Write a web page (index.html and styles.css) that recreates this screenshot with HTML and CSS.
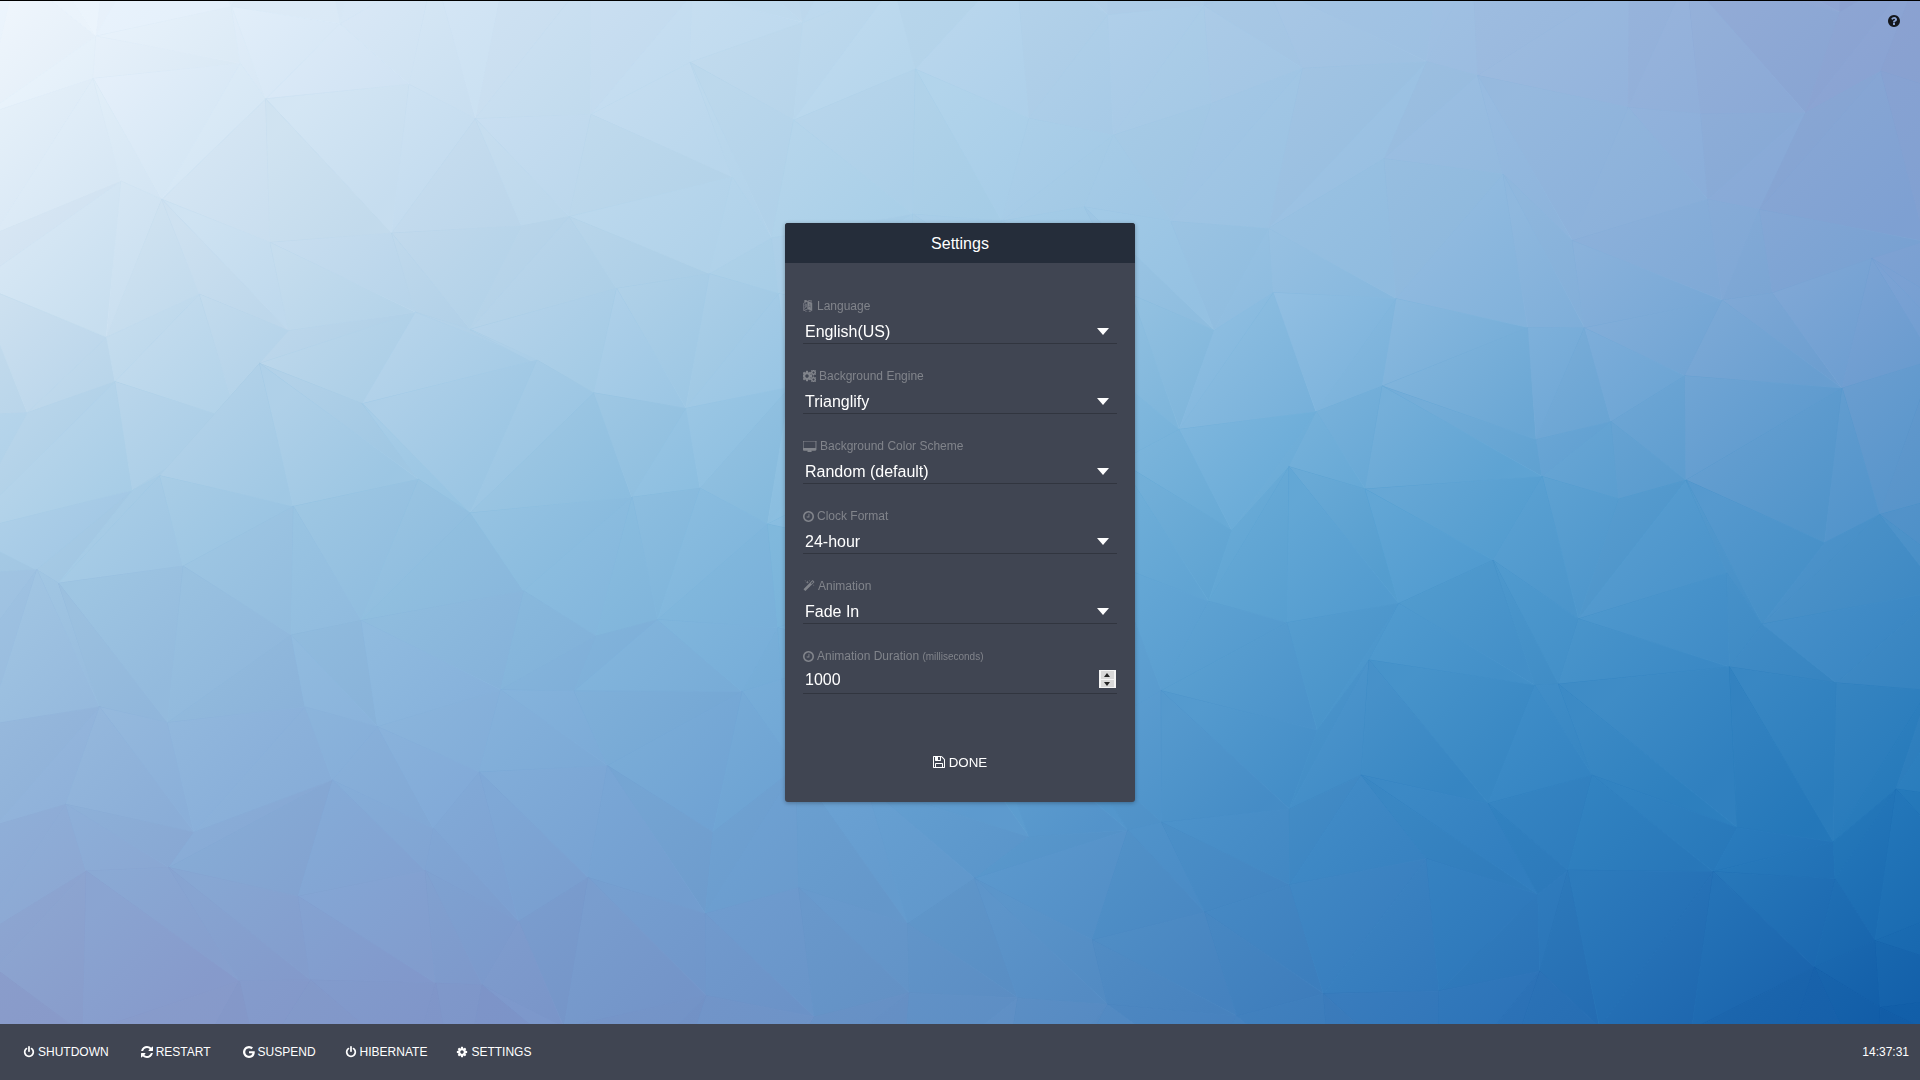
FILE: index.html
```html
<!DOCTYPE html>
<html lang="en">
<head>
<meta charset="utf-8">
<title>Settings</title>
<link rel="stylesheet" href="styles.css">
</head>
<body>
<svg class="sprite" aria-hidden="true">
  <symbol id="i-power" viewBox="0 0 1792 1792"><path d="M1664 896q0 156-61 298t-164 245-245 164-298 61-298-61-245-164-164-245-61-298q0-182 80.5-343t226.5-270q43-32 95.5-25t83.5 50q32 42 24.5 94.5t-49.5 84.5q-98 74-151.5 181t-53.5 228q0 104 40.5 198.5t109.5 163.5 163.5 109.5 198.5 40.5 198.5-40.5 163.5-109.5 109.5-163.5 40.5-198.5q0-121-53.5-228t-151.5-181q-42-32-49.5-84.5t24.5-94.5q31-43 84-50t95 25q146 109 226.5 270t80.5 343zm-640-768v640q0 52-38 90t-90 38-90-38-38-90v-640q0-52 38-90t90-38 90 38 38 90z"/></symbol>
  <symbol id="i-cog" viewBox="0 0 1792 1792"><path d="M1152 896q0-106-75-181t-181-75-181 75-75 181 75 181 181 75 181-75 75-181zm512-109v222q0 12-8 23t-20 13l-185 28q-19 54-39 91 35 50 107 138 10 12 10 25t-9 23q-27 37-99 108t-94 71q-12 0-26-9l-138-108q-44 23-91 38-16 136-29 186-7 28-36 28h-222q-14 0-24.5-8.5t-11.5-21.5l-28-184q-49-16-90-37l-141 107q-10 9-25 9-14 0-25-11-126-114-165-168-7-10-7-23 0-12 8-23 15-21 51-66.5t54-70.5q-27-50-41-99l-183-27q-13-2-21-12.5t-8-23.5v-222q0-12 8-23t19-13l186-28q14-46 39-92-40-57-107-138-10-12-10-24 0-10 9-23 26-36 98.5-107.5t94.5-71.5q13 0 26 10l138 107q44-23 91-38 16-136 29-186 7-28 36-28h222q14 0 24.5 8.5t11.5 21.5l28 184q49 16 90 37l142-107q9-9 24-9 13 0 25 10 129 119 165 170 7 8 7 22 0 12-8 23-15 21-51 66.5t-54 70.5q26 50 41 98l183 28q13 2 21 12.5t8 23.5z"/></symbol>
  <symbol id="i-clock" viewBox="128 128 1536 1536"><path d="M1024 544v448q0 14-9 23t-23 9h-320q-14 0-23-9t-9-23v-64q0-14 9-23t23-9h224v-352q0-14 9-23t23-9h64q14 0 23 9t9 23zm416 352q0-148-73-273t-198-198-273-73-273 73-198 198-73 273 73 273 198 198 273 73 273-73 198-198 73-273zm224 0q0 209-103 385.5t-279.5 279.5-385.5 103-385.5-103-279.5-279.5-103-385.5 103-385.5 279.5-279.5 385.5-103 385.5 103 279.5 279.5 103 385.5z"/></symbol>
</svg>

<canvas id="backdrop" class="backdrop" width="1920" height="1080"></canvas>

<a class="help" href="#" aria-label="Help">
  <svg viewBox="128 128 1536 1536"><path d="M1024 1376v-192q0-14-9-23t-23-9h-192q-14 0-23 9t-9 23v192q0 14 9 23t23 9h192q14 0 23-9t9-23zm256-672q0-88-55.5-163t-138.5-116-170-41q-243 0-371 213-15 24 8 42l132 100q7 6 19 6 16 0 25-12 53-68 86-92 34-24 86-24 48 0 85.5 26t37.5 59q0 38-20 61t-68 45q-63 28-115.5 86.5t-52.5 125.5v36q0 14 9 23t23 9h192q14 0 23-9t9-23q0-19 21.5-49.5t54.5-49.5q32-18 49-28.5t46-35 44.5-48 28-60.5 12.5-81zm384 192q0 209-103 385.5t-279.5 279.5-385.5 103-385.5-103-279.5-279.5-103-385.5 103-385.5 279.5-279.5 385.5-103 385.5 103 279.5 279.5 103 385.5z"/></svg>
</a>

<main class="stage">
  <section class="panel">
    <header class="panel-title">Settings</header>
    <form class="panel-body">
      <div class="field">
        <label class="field-label">
          <svg class="ico ico-lang" viewBox="0 64 2048 1664" preserveAspectRatio="none"><path d="M782 1078q-1 3-12.5-.5t-31.5-11.5l-20-9q-44-20-87-49-7-5-41-31.5t-38-28.5q-67 103-134 181-81 95-105 110-4 2-19.5 4t-18.5 0q6-4 82-92 21-24 85.5-115t78.5-118q17-30 51-98.5t36-77.5q-8-1-110 33-8 2-27.5 7.5t-34.5 9.5-17 5q-2 2-2 10.5t-1 9.5q-5 10-31 15-23 7-47 0-18-4-28-21-4-6-5-23 6-2 24.5-5t29.5-6q58-16 105-32 100-35 102-35 10-2 43-19.5t44-21.5q9-3 21.5-8t14.5-5.5 6 .5q2 12-1 33 0 2-12.5 27t-26.5 53.5-17 33.5q-25 50-77 131l64 28q12 6 74.5 32t67.5 28q4 1 10.5 25.5t4.5 30.5zm-205-486q3 15-4 28-12 23-50 38-30 12-60 12-26-3-49-26-14-15-18-41l1-3q3 3 19.5 5t26.5 0 58-16q36-12 55-14 17 0 21 17zm698 129l63 227-139-42zm-1108 800l694-232v-1032l-694 233v1031zm1241-317l102 31-181-657-100-31-216 536 102 31 45-110 211 65zm-503-962l573 184v-380zm311 1323l158 13-54 160-40-66q-130 83-276 108-58 12-91 12h-84q-79 0-199.5-39t-183.5-85q-8-7-8-16 0-8 5-13.5t13-5.5q4 0 18 7.5t30.5 16.5 20.5 11q73 37 159.5 61.5t157.5 24.5q95 0 167-14.5t157-50.5q15-7 30.5-15.5t34-19 28.5-16.5zm448-1079v1079l-774-246q-14 6-375 127.5t-368 121.5q-13 0-18-13 0-1-1-3v-1078q3-9 4-10 5-6 20-11 106-35 148-49v-384l558 198q2 0 160.5-55t316-108.5 161.5-53.5q20 0 20 21v418z"/></svg>
          <span>Language</span>
        </label>
        <div class="control control-select">
          <select class="input"><option>English(US)</option></select>
        </div>
      </div>
      <div class="field">
        <label class="field-label">
          <svg class="ico ico-cogs" viewBox="0 0 26 24"><use href="#i-cog" x="-4" y="0" width="24" height="24"/><use href="#i-cog" x="14" y="-2" width="14" height="14"/><use href="#i-cog" x="14" y="12" width="14" height="14"/></svg>
          <span>Background Engine</span>
        </label>
        <div class="control control-select">
          <select class="input"><option>Trianglify</option></select>
        </div>
      </div>
      <div class="field">
        <label class="field-label">
          <svg class="ico ico-desktop" viewBox="64 128 1792 1536"><path d="M1728 992v-832q0-13-9.5-22.5t-22.5-9.5h-1600q-13 0-22.5 9.5t-9.5 22.5v832q0 13 9.5 22.5t22.5 9.5h1600q13 0 22.5-9.5t9.5-22.5zm128-832v1088q0 66-47 113t-113 47h-544q0 37 16 77.5t32 71 16 43.5q0 26-19 45t-45 19h-512q-26 0-45-19t-19-45q0-14 16-44t32-70 16-78h-544q-66 0-113-47t-47-113v-1088q0-66 47-113t113-47h1632q66 0 113 47t47 113z" transform="translate(0 64)"/></svg>
          <span>Background Color Scheme</span>
        </label>
        <div class="control control-select">
          <select class="input"><option>Random (default)</option></select>
        </div>
      </div>
      <div class="field">
        <label class="field-label">
          <svg class="ico ico-clock"><use href="#i-clock"/></svg>
          <span>Clock Format</span>
        </label>
        <div class="control control-select">
          <select class="input"><option>24-hour</option></select>
        </div>
      </div>
      <div class="field">
        <label class="field-label">
          <svg class="ico ico-magic" viewBox="0 0 1792 1792"><path d="M1254 581l293-293-107-107-293 293zm447-293q0 27-18 45l-1286 1286q-18 18-45 18t-45-18l-198-198q-18-18-18-45t18-45l1286-1286q18-18 45-18t45 18l198 198q18 18 18 45zm-1351-190l98 30-98 30-30 98-30-98-98-30 98-30 30-98zm350 162l196 60-196 60-60 196-60-196-196-60 196-60 60-196zm930 478l98 30-98 30-30 98-30-98-98-30 98-30 30-98zm-640-640l98 30-98 30-30 98-30-98-98-30 98-30 30-98z"/></svg>
          <span>Animation</span>
        </label>
        <div class="control control-select">
          <select class="input"><option>Fade In</option></select>
        </div>
      </div>
      <div class="field field-last">
        <label class="field-label">
          <svg class="ico ico-clock"><use href="#i-clock"/></svg>
          <span>Animation Duration <small class="hint">(milliseconds)</small></span>
        </label>
        <div class="control control-number">
          <input class="input input-number" type="number" value="1000">
          <span class="spinner" aria-hidden="true"><i class="spin-up"></i><i class="spin-down"></i></span>
        </div>
      </div>
      <div class="panel-actions">
        <button type="button" class="btn-done">
          <svg class="ico-done" viewBox="128 128 1536 1536"><path d="M512 1536h768v-384h-768v384zm896 0h128v-896q0-14-10-38.5t-20-34.5l-281-281q-10-10-34-20t-39-10v416q0 40-28 68t-68 28h-576q-40 0-68-28t-28-68v-416h-128v1280h128v-416q0-40 28-68t68-28h832q40 0 68 28t28 68v416zm-384-928v-320q0-13-9.5-22.5t-22.5-9.5h-192q-13 0-22.5 9.5t-9.5 22.5v320q0 13 9.5 22.5t22.5 9.5h192q13 0 22.5-9.5t9.5-22.5zm640 32v928q0 40-28 68t-68 28h-1344q-40 0-68-28t-28-68v-1344q0-40 28-68t68-28h928q40 0 88 20t76 48l280 280q28 28 48 76t20 88z"/></svg>
          <span>DONE</span>
        </button>
      </div>
    </form>
  </section>
</main>

<footer class="taskbar">
  <nav class="actions">
    <a class="action" href="#"><svg class="ico-bar"><use href="#i-power"/></svg>SHUTDOWN</a>
    <a class="action action-restart" href="#"><svg class="ico-bar" viewBox="128 128 1536 1536"><path d="M1639 1056q0 5-1 7-64 268-268 434.5t-478 166.5q-146 0-282.5-55t-243.5-157l-129 129q-19 19-45 19t-45-19-19-45v-448q0-26 19-45t45-19h448q26 0 45 19t19 45-19 45l-137 137q71 66 161 102t187 36q134 0 250-65t186-179q11-17 53-117 8-23 30-23h192q13 0 22.5 9.5t9.5 22.5zm25-800v448q0 26-19 45t-45 19h-448q-26 0-45-19t-19-45 19-45l138-138q-148-137-349-137-134 0-250 65t-186 179q-11 17-53 117-8 23-30 23h-199q-13 0-22.5-9.5t-9.5-22.5v-7q65-268 270-434.5t480-166.5q146 0 284 55.5t245 156.5l130-129q19-19 45-19t45 19 19 45z"/></svg>RESTART</a>
    <a class="action action-suspend" href="#"><svg class="ico-bar" viewBox="128 128 1536 1536"><path d="M896 786h725q12 67 12 128 0 217-91 387.5t-259.5 266.5-386.5 96q-157 0-299-60.5t-245-163.5-163.5-245-60.5-299 60.5-299 163.5-245 245-163.5 299-60.5q300 0 515 201l-209 201q-123-119-306-119-129 0-238.5 65t-173.5 176.5-64 243.5 64 243.5 173.5 176.5 238.5 65q87 0 160-24t120-60 82-82 51.5-87 22.5-78h-436v-264z"/></svg>SUSPEND</a>
    <a class="action" href="#"><svg class="ico-bar"><use href="#i-power"/></svg>HIBERNATE</a>
    <a class="action" href="#"><svg class="ico-bar"><use href="#i-cog"/></svg>SETTINGS</a>
  </nav>
  <time class="clock">14:37:31</time>
</footer>

<script src="script.js"></script>
</body>
</html>
```

FILE: styles.css
```css
* { box-sizing: border-box; }

html, body { height: 100%; }

body {
  margin: 0;
  height: 100vh;
  overflow: hidden;
  display: flex;
  flex-direction: column;
  border-top: 1px solid #000;
  background: #7cb6dc;
  font-family: "Liberation Sans", Arial, sans-serif;
  color: #fff;
}

.sprite { width: 0; height: 0; position: absolute; }

.backdrop {
  position: absolute;
  left: 0;
  top: 1px;
  width: 1920px;
  height: 1080px;
}

.help {
  position: absolute;
  top: 15px;
  right: 20px;
  width: 12px;
  height: 12px;
  fill: #14171c;
  display: block;
}
.help svg { display: block; width: 12px; height: 12px; }

.stage {
  position: relative;
  flex: 1;
  display: flex;
  align-items: center;
  justify-content: center;
}

.panel {
  width: 350px;
  background: #404552;
  border-radius: 3px;
  box-shadow: 0 1px 4px rgba(0, 0, 0, .3);
  overflow: hidden;
}

.panel-title {
  height: 40px;
  line-height: 41px;
  background: #252d3a;
  text-align: center;
  font-size: 16px;
}

.panel-body {
  padding: 36px 18px 22px;
  display: flex;
  flex-direction: column;
}

.field { margin-bottom: 25px; }
.field-last { margin-bottom: 0; }

.field-label {
  display: flex;
  align-items: center;
  height: 14px;
  font-size: 12px;
  line-height: 14px;
  color: #81848b;
  fill: #81848b;
  gap: 3px;
}

.hint { font-size: 10px; }

.ico { display: block; flex: none; height: 11px; }
.ico-lang { width: 11px; height: 12px; stroke: #81848b; stroke-width: 70; }
.ico-cogs { width: 13px; height: 12px; }
.ico-desktop { width: 14px; }
.ico-clock { width: 11px; }
.ico-magic { width: 12px; height: 12px; }

.control {
  position: relative;
  height: 31px;
  border-bottom: 1px solid #31353f;
  display: flex;
}

.input {
  appearance: none;
  -webkit-appearance: none;
  flex: 1;
  min-width: 0;
  border: 0;
  outline: 0;
  margin: 0;
  background: transparent;
  color: #fff;
  font: 16px "Liberation Sans", Arial, sans-serif;
  padding: 7px 0 0 2px;
}
select.input option { background: #404552; }

.input-number { padding-top: 3px; }
.input-number::-webkit-inner-spin-button,
.input-number::-webkit-outer-spin-button { -webkit-appearance: none; margin: 0; }

.control-select::after {
  content: "";
  position: absolute;
  right: 8px;
  top: 15px;
  border-left: 6px solid transparent;
  border-right: 6px solid transparent;
  border-top: 7px solid #fff;
  pointer-events: none;
}

.spinner {
  position: absolute;
  right: 1px;
  top: 7px;
  width: 17px;
  height: 18px;
  background: #f4f4f4;
  padding: 1px 2px 1px 2px;
  display: flex;
  flex-direction: column;
  gap: 1px;
}
.spinner i {
  flex: 1;
  background: #d8d8d8;
  position: relative;
  display: block;
}
.spinner i::after {
  content: "";
  position: absolute;
  left: 3px;
  top: 2px;
  border-left: 3.5px solid transparent;
  border-right: 3.5px solid transparent;
}
.spin-up::after { border-bottom: 4px solid #222; }
.spin-down::after { border-top: 4px solid #222; }

.panel-actions {
  margin-top: 50px;
  height: 36px;
  display: flex;
  justify-content: center;
  align-items: center;
}

.btn-done {
  display: flex;
  align-items: center;
  gap: 4px;
  padding: 0;
  border: 0;
  background: none;
  color: #fff;
  fill: #fff;
  font: 13.33px "Liberation Sans", Arial, sans-serif;
}
.ico-done { width: 12px; height: 12px; display: block; }

.taskbar {
  position: relative;
  height: 56px;
  flex: none;
  background: #404552;
  display: flex;
  align-items: center;
  justify-content: space-between;
  padding: 0 11px 0 23px;
}

.actions { display: flex; gap: 29px; }

.action {
  display: flex;
  align-items: center;
  gap: 3px;
  color: #fff;
  fill: #fff;
  text-decoration: none;
  font-size: 12px;
}
.action-restart { margin-left: 3px; }
.action-suspend { margin-left: 3px; }

.ico-bar { width: 12px; height: 12px; display: block; }

.clock { font-size: 12px; }
```

FILE: script.js
```js
// Low-poly backdrop: a jittered triangle mesh shaded from a colour lattice.
(function () {
  var canvas = document.getElementById('backdrop');
  var ctx = canvas.getContext('2d');
  var W = 1920, H = 1080, CELL = 100;

  var seed = 20240611;
  function rnd() {
    seed = (seed * 1664525 + 1013904223) >>> 0;
    return seed / 4294967296;
  }

  var XS = [0, 480, 960, 1440, 1920];
  var YS = [0, 270, 540, 810, 1030];
  var GRID = [
    ['f2f8fe', 'd2e4f4', 'b8d6ec', 'a0c0e2', '8ba0d0'],
    ['d3e4f2', 'b9d5ea', 'a2cbe6', '8ebadf', '7ba0d2'],
    ['a6cbe5', '8fbfe0', '74b2da', '559fd1', '4a90c8'],
    ['8fb0d8', '7fa8d6', '5f9ccf', '3584c2', '2277b9'],
    ['8a9ac9', '7e94c8', '5f8fc4', '2f74b8', '0d58a4']
  ].map(function (row) {
    return row.map(function (h) {
      return [parseInt(h.slice(0, 2), 16), parseInt(h.slice(2, 4), 16), parseInt(h.slice(4, 6), 16)];
    });
  });

  function idx(list, v) {
    for (var i = 0; i < list.length - 2; i++) if (v < list[i + 1]) return i;
    return list.length - 2;
  }
  function clamp(v) { return Math.max(0, Math.min(1, v)); }

  function colour(x, y) {
    var i = idx(XS, x), j = idx(YS, y);
    var u = clamp((x - XS[i]) / (XS[i + 1] - XS[i]));
    var v = clamp((y - YS[j]) / (YS[j + 1] - YS[j]));
    var out = [];
    for (var c = 0; c < 3; c++) {
      out[c] = (GRID[j][i][c] * (1 - u) + GRID[j][i + 1][c] * u) * (1 - v) +
               (GRID[j + 1][i][c] * (1 - u) + GRID[j + 1][i + 1][c] * u) * v;
    }
    return out;
  }

  var cols = Math.ceil(W / CELL) + 3, rows = Math.ceil(H / CELL) + 3, pts = [];
  for (var r = 0; r < rows; r++) {
    pts[r] = [];
    for (var c = 0; c < cols; c++) {
      pts[r][c] = [
        (c - 1) * CELL + (rnd() - 0.5) * CELL * 0.85,
        (r - 1) * CELL + (rnd() - 0.5) * CELL * 0.85
      ];
    }
  }

  // Shade each facet from its own gradient so neighbours blend softly.
  function tri(a, b, d) {
    var cx = (a[0] + b[0] + d[0]) / 3, cy = (a[1] + b[1] + d[1]) / 3;
    var col = colour(Math.max(0, Math.min(W, cx)), Math.max(0, Math.min(H, cy)));
    var start = colour(Math.max(0, Math.min(W, cx - 45)), Math.max(0, Math.min(H, cy - 45)));
    var end = colour(Math.max(0, Math.min(W, cx + 45)), Math.max(0, Math.min(H, cy + 45)));
    var n = (rnd() - 0.5) * 2.6;
    function css(v) {
      return 'rgb(' + Math.round(v[0] + n) + ',' + Math.round(v[1] + n) + ',' + Math.round(v[2] + n) + ')';
    }
    var g = ctx.createLinearGradient(cx - 45, cy - 45, cx + 45, cy + 45);
    g.addColorStop(0, css(start));
    g.addColorStop(1, css(end));
    ctx.fillStyle = g;
    ctx.strokeStyle = css(col);
    ctx.beginPath();
    ctx.moveTo(a[0], a[1]);
    ctx.lineTo(b[0], b[1]);
    ctx.lineTo(d[0], d[1]);
    ctx.closePath();
    ctx.stroke();
    ctx.fill();
  }

  for (var ry = 0; ry < rows - 1; ry++) {
    for (var cx = 0; cx < cols - 1; cx++) {
      var p = pts[ry][cx], q = pts[ry][cx + 1], s = pts[ry + 1][cx], t = pts[ry + 1][cx + 1];
      if (rnd() < 0.5) { tri(p, q, s); tri(q, t, s); }
      else { tri(p, q, t); tri(p, t, s); }
    }
  }
})();
```
